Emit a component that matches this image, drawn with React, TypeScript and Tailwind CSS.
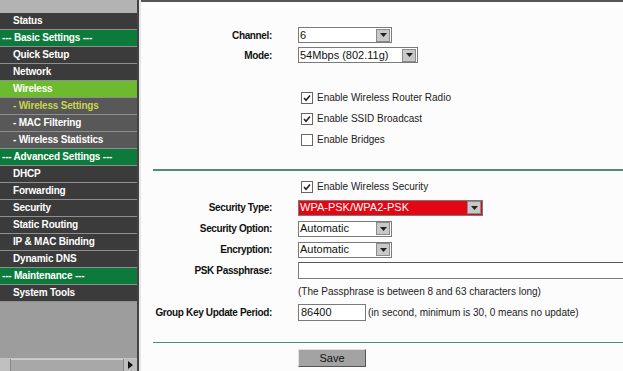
const menu = [
  { label: "Status", kind: "item" },
  { label: "--- Basic Settings ---", kind: "head" },
  { label: "Quick Setup", kind: "item" },
  { label: "Network", kind: "item" },
  { label: "Wireless", kind: "active" },
  { label: "- Wireless Settings", kind: "subActive" },
  { label: "- MAC Filtering", kind: "sub" },
  { label: "- Wireless Statistics", kind: "sub" },
  { label: "--- Advanced Settings ---", kind: "head" },
  { label: "DHCP", kind: "item" },
  { label: "Forwarding", kind: "item" },
  { label: "Security", kind: "item" },
  { label: "Static Routing", kind: "item" },
  { label: "IP & MAC Binding", kind: "item" },
  { label: "Dynamic DNS", kind: "item" },
  { label: "--- Maintenance ---", kind: "head" },
  { label: "System Tools", kind: "item" },
];

const kindClass: Record<string, string> = {
  item: "bg-[#3b3b3b] text-white pl-[13px]",
  head: "bg-[#0b7a3b] text-white pl-[2px]",
  active: "bg-[#6cba2d] text-white pl-[13px]",
  sub: "bg-[#585858] text-white pl-[13px]",
  subActive: "bg-[#585858] text-[#c9d64c] pl-[13px]",
};

const Arrow = () => (
  <div className="w-[14px] h-[13px] mr-[1px] bg-[#c8c8c8] border border-[#8a8a8a] flex items-center justify-center">
    <svg width="7" height="4" viewBox="0 0 7 4">
      <path d="M0 0 L7 0 L3.5 4 Z" fill="#222" />
    </svg>
  </div>
);

const Select = ({
  value,
  width,
  red,
}: {
  value: string;
  width: string;
  red?: boolean;
}) => (
  <div
    className={`${width} h-[16px] border border-[#7a7a7a] flex items-center justify-between ${
      red ? "bg-[#e30613] text-white" : "bg-white text-[#111]"
    }`}
  >
    <span className="pl-[1px] leading-none text-[11px]">{value}</span>
    <Arrow />
  </div>
);

const Check = ({ on }: { on: boolean }) => (
  <div className="w-[12px] h-[12px] border border-[#666] bg-white flex items-center justify-center">
    {on && (
      <svg width="8" height="8" viewBox="0 0 8 8">
        <path d="M1 4 L3 6.2 L7 1.5" stroke="#222" strokeWidth="1.6" fill="none" />
      </svg>
    )}
  </div>
);

const Row = ({
  label,
  children,
  h = "h-[21px]",
}: {
  label?: string;
  children: React.ReactNode;
  h?: string;
}) => (
  <div className={`flex items-center ${h}`}>
    <div className="w-[131px] text-right font-bold text-[#111] shrink-0 whitespace-nowrap tracking-[-0.35px]">
      {label}
    </div>
    <div className="ml-[26px] flex items-center whitespace-nowrap">
      {children}
    </div>
  </div>
);

const CheckRow = ({ on, text }: { on: boolean; text: string }) => (
  <Row>
    <div className="ml-[3px] flex items-center gap-[4px]">
      <Check on={on} />
      <span className="text-[#222]">{text}</span>
    </div>
  </Row>
);

const App = () => {
  return (
    <div
      className="w-[623px] h-[371px] overflow-hidden flex text-[10px] bg-[#fcfcfc]"
      style={{ fontFamily: '"Liberation Sans", Arial, sans-serif' }}
    >
      <div className="w-[141px] shrink-0 flex">
        <div className="w-[137px] flex flex-col bg-[#9d9d9d]">
          <div className="h-[13px] bg-[#b3b3b3]" />
          {menu.map((m) => (
            <div
              key={m.label}
              className={`h-[17px] border-b border-[#8f8f8f] flex items-center font-bold leading-none whitespace-nowrap tracking-[-0.2px] ${kindClass[m.kind]}`}
            >
              {m.label}
            </div>
          ))}
          <div className="flex-1" />
          <div className="h-[13px] flex bg-[#b0b0b0] border-t border-[#c4c4c4]">
            <div className="w-[11px] bg-[#c0c0c0] border-r border-[#888]" />
            <div className="flex-1 bg-[#a8a8a8] border-t border-[#cfcfcf]" />
            <div className="w-[14px] bg-[#bdbdbd] border-l border-[#888] flex items-center justify-center">
              <svg width="5" height="8" viewBox="0 0 5 8">
                <path d="M0 0 L5 4 L0 8 Z" fill="#111" />
              </svg>
            </div>
          </div>
        </div>
        <div className="w-[2px] bg-[#444]" />
        <div className="w-[2px] bg-[#e6e6e6]" />
      </div>

      <div className="flex-1 flex flex-col">
        <div className="h-[2px] bg-[#555]" />
        <div className="pt-[23px] flex flex-col">
          <Row label="Channel:" h="h-[20px]">
            <Select value="6" width="w-[94px]" />
          </Row>
          <Row label="Mode:" h="h-[20px]">
            <Select value="54Mbps (802.11g)" width="w-[120px]" />
          </Row>
          <div className="h-[22px]" />
          <CheckRow on text="Enable Wireless Router Radio" />
          <CheckRow on text="Enable SSID Broadcast" />
          <CheckRow on={false} text="Enable Bridges" />
          <div className="h-[19px]" />
          <div className="ml-[12px] h-[2px] bg-[#4a8f74]" />
          <div className="h-[5px]" />
          <CheckRow on text="Enable Wireless Security" />
          <Row label="Security Type:">
            <Select value="WPA-PSK/WPA2-PSK" width="w-[185px]" red />
          </Row>
          <Row label="Security Option:">
            <Select value="Automatic" width="w-[94px]" />
          </Row>
          <Row label="Encryption:">
            <Select value="Automatic" width="w-[94px]" />
          </Row>
          <Row label="PSK Passphrase:">
            <div className="w-[340px] h-[17px] bg-white border border-[#7a7a7a] border-t-[#555]" />
          </Row>
          <Row>
            <span className="text-[#222]">
              (The Passphrase is between 8 and 63 characters long)
            </span>
          </Row>
          <Row label="Group Key Update Period:">
            <div className="w-[68px] h-[17px] bg-white border border-[#7a7a7a] flex items-center pl-[2px] text-[11px] text-[#111]">
              86400
            </div>
            <span className="ml-[2px] text-[#222]">
              (in second, minimum is 30, 0 means no update)
            </span>
          </Row>
          <div className="h-[19px]" />
          <div className="ml-[12px] h-[1px] bg-[#4a8f74]" />
          <div className="h-[6px]" />
          <Row h="h-[18px]">
            <div className="w-[68px] h-[18px] bg-[#a3a3a3] border border-t-[#e0e0e0] border-l-[#e0e0e0] border-r-[#555] border-b-[#555] flex items-center justify-center text-[11px] text-[#111]">
              Save
            </div>
          </Row>
        </div>
      </div>
    </div>
  );
};

export default App;
